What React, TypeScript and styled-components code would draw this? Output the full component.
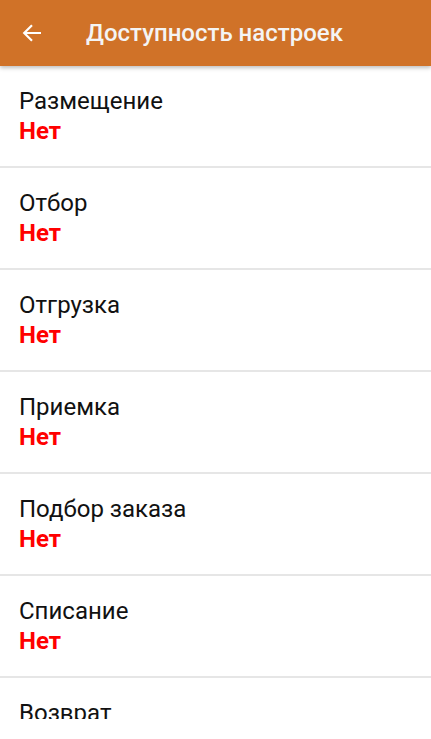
import React from "react";
import styled, {createGlobalStyle} from "styled-components";

const sections = [
  "Размещение",
  "Отбор",
  "Отгрузка",
  "Приемка",
  "Подбор заказа",
  "Списание",
  "Возврат",
];

function App() {
  return (
    <>
      <GlobalStyle />
      <Screen>
        <Header>
          <BackBtn aria-label="Назад">
            <svg width="20" height="20" viewBox="0 0 20 20">
              <path
                d="M19 10H2.5M10 2.2L2.2 10l7.8 7.8"
                fill="none"
                stroke="#fff"
                strokeWidth="2.2"
              />
            </svg>
          </BackBtn>
          <Title>Доступность настроек</Title>
        </Header>
        <List>
          {sections.map((name) => (
            <Row key={name}>
              <Label>{name}</Label>
              <Value>Нет</Value>
            </Row>
          ))}
        </List>
      </Screen>
    </>
  );
}

export default App;

const GlobalStyle = createGlobalStyle`
  html, body {
    margin: 0;
    padding: 0;
    background: #fff;
    font-family: Roboto, "Liberation Sans", sans-serif;
  }
`;

const Screen = styled.div`
  width: 431px;
  height: 739px;
  overflow: hidden;
  background: #fff;
`;

const Header = styled.div`
  position: relative;
  z-index: 1;
  height: 66px;
  display: flex;
  align-items: center;
  background: #d07228;
  box-shadow: 0 2px 4px rgba(0, 0, 0, 0.25);
`;

const BackBtn = styled.div`
  width: 20px;
  height: 20px;
  margin-left: 22px;
  display: flex;
  svg {
    display: block;
  }
`;

const Title = styled.div`
  margin-left: 44px;
  color: #f4f4f4;
  font-size: 24px;
  font-weight: 500;
`;

const List = styled.div`
  height: 653px;
  overflow: hidden;
  display: flex;
  flex-direction: column;
`;

const Row = styled.div`
  flex-shrink: 0;
  padding: 20px 19px;
  border-bottom: 2px solid #e6e6e6;
`;

const Label = styled.div`
  font-size: 24px;
  line-height: 30px;
  color: #111;
`;

const Value = styled.div`
  font-size: 24px;
  line-height: 30px;
  font-weight: 700;
  color: #ff0000;
`;
